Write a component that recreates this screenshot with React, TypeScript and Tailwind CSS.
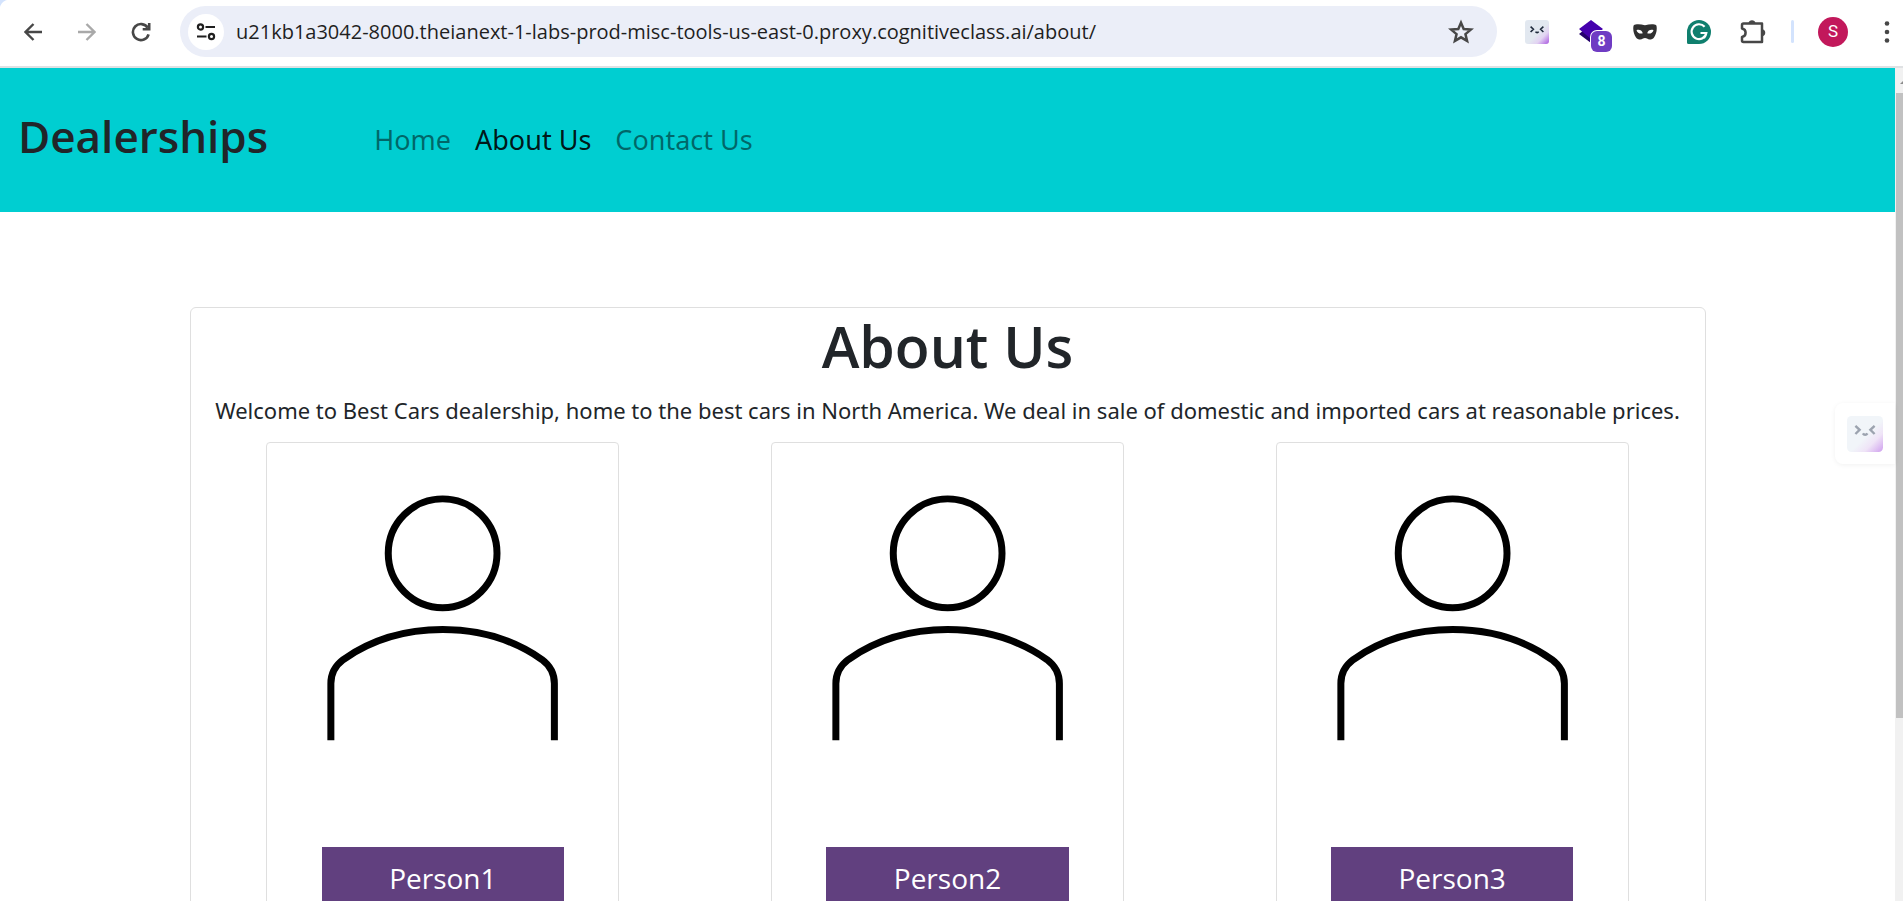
import type { ReactNode } from "react";

const people = ["Person1", "Person2", "Person3"];

const links = [
  { label: "Home", href: "/", active: false },
  { label: "About Us", href: "/about", active: true },
  { label: "Contact Us", href: "/contact", active: false },
];

function ToolButton({ label, children }: { label: string; children: ReactNode }) {
  return (
    <button type="button" aria-label={label} className="flex size-9 shrink-0 items-center justify-center">
      {children}
    </button>
  );
}

function FaceIcon({ className, stroke, id, soft }: { className: string; stroke: string; id: string; soft: boolean }) {
  return (
    <svg viewBox="0 0 24 24" className={className} fill="none" aria-hidden="true">
      <defs>
        <linearGradient id={id} x1="4" y1="4" x2="24" y2="24" gradientUnits="userSpaceOnUse">
          <stop offset="0.45" stopColor={soft ? "#f1f5f9" : "#e2e8f0"} />
          <stop offset="0.68" stopColor={soft ? "#efe4f7" : "#e2d2f2"} />
          <stop offset="1" stopColor={soft ? "#cf9fee" : "#a855e0"} />
        </linearGradient>
      </defs>
      <rect width="24" height="24" rx="3" fill={`url(#${id})`} />
      <path d="M5.6 6.6 8.4 9.2 5.6 12M18.4 6.6l-2.8 2.6 2.8 2.8M10.6 11.6c.7 1.3 2.3 1.3 3 0" stroke={stroke} strokeWidth="1.6" />
    </svg>
  );
}

function BrowserBar() {
  return (
    <div className="flex h-[68px] shrink-0 items-center border-b-2 border-[#dfe1e3] bg-white bg-[radial-gradient(circle_at_10px_10px,#fff_10px,#d3e3fd_11px)] bg-[length:10px_10px] bg-no-repeat pb-[3px] pl-[15px] text-[#474747]">
      <div className="flex items-center gap-[18px]">
        <ToolButton label="Back">
          <svg viewBox="0 0 18 18" className="size-[18px]" fill="none" stroke="currentColor" strokeWidth="2.4" aria-hidden="true">
            <path d="M18 9H1.500M9.500 1 1.500 9l8 8" />
          </svg>
        </ToolButton>
        <ToolButton label="Forward">
          <svg viewBox="0 0 18 18" className="size-[18px] text-[#a9a9a9]" fill="none" stroke="currentColor" strokeWidth="2.4" aria-hidden="true">
            <path d="M0 9h16.500M8.500 1l8 8-8 8" />
          </svg>
        </ToolButton>
        <ToolButton label="Reload">
          <svg viewBox="0 0 20 20" className="size-5" fill="none" stroke="currentColor" strokeWidth="2.6" aria-hidden="true">
            <path d="M17.600 12.300a8 8 0 1 1-.9-6.500M18.200 1v6.200h-6.500" />
          </svg>
        </ToolButton>
      </div>
      <div className="ml-[21px] flex h-[51px] min-w-0 flex-1 items-center rounded-full bg-[#ebeef8] pr-[18px] pl-2">
        <button type="button" aria-label="Site information" className="flex size-9 shrink-0 items-center justify-center rounded-full bg-white text-[#1f1f1f]">
          <svg viewBox="0 0 20 18" className="h-[18px] w-5" fill="none" stroke="currentColor" strokeWidth="2.2" aria-hidden="true">
            <circle cx="4.500" cy="4" r="2.600" />
            <path d="M9.500 4H19M1 13.500h9.500" />
            <circle cx="15.500" cy="13.500" r="2.600" />
          </svg>
        </button>
        <input
          type="text"
          aria-label="Address"
          defaultValue="u21kb1a3042-8000.theianext-1-labs-prod-misc-tools-us-east-0.proxy.cognitiveclass.ai/about/"
          className="ml-3 h-9 min-w-0 flex-1 bg-transparent font-['Open_Sans',sans-serif] text-[20px] text-[#1f1f1f] outline-none"
        />
        <ToolButton label="Bookmark this tab">
          <svg viewBox="0 0 24 24" className="size-[26px]" fill="none" stroke="currentColor" strokeWidth="2.3" aria-hidden="true">
            <path d="m12 3.400 2.500 5.900 6.600.5-5 4.200 1.500 6.200-5.600-3.300-5.600 3.300 1.500-6.200-5-4.200 6.600-.5z" />
          </svg>
        </ToolButton>
      </div>
      <div className="ml-[22px] flex items-center gap-[18px]">
        <ToolButton label="Face extension">
          <FaceIcon id="face-toolbar" className="size-6" stroke="#1e293b" soft={false} />
        </ToolButton>
        <ToolButton label="Layers extension, 8 items">
          <span className="relative block size-6">
            <svg viewBox="0 0 24 24" className="size-6" aria-hidden="true">
              <path d="m0 14 5-4 19 0-12 13z" fill="#24006b" />
              <path d="M12 0 24 9 12 19 0 9z" fill="#4500ad" />
            </svg>
            <span className="absolute top-[11px] left-3 flex size-[21px] items-center justify-center rounded-md bg-[#6f3cc3] font-['Roboto',sans-serif] text-[14px] font-bold text-white ring-1 ring-white">
              8
            </span>
          </span>
        </ToolButton>
        <ToolButton label="Mask extension">
          <svg viewBox="0 0 24 16" className="h-4 w-6" aria-hidden="true">
            <path d="M.6 1.400C3-.3 7.500.2 12 1.200 16.500.2 21-.3 23.400 1.400c1 4-.2 9-2.400 12-1.800 2.400-5 2.600-7 1.200-1-.7-3-.7-4 0-2 1.400-5.200 1.200-7-1.200C.8 10.400-.4 5.400.6 1.400z" fill="#303030" />
            <path d="M3.500 6.200c2.500-1 5.500 0 6.300 3-2.300 1-5.300.3-6.300-3zM20.500 6.200c-2.500-1-5.500 0-6.300 3 2.300 1 5.300.3 6.300-3z" fill="#fff" />
          </svg>
        </ToolButton>
        <ToolButton label="Writing assistant">
          <svg viewBox="0 0 24 24" className="size-6" fill="none" aria-hidden="true">
            <path d="M12 0a12 12 0 1 1 0 24H1.500A1.500 1.500 0 0 1 0 22.500V12A12 12 0 0 1 12 0z" fill="#0f7f6e" />
            <path d="M17.600 6.800A7.400 7.400 0 1 0 19.300 13H13.500M19.300 13c-.3 1.800-1 3.500-2.300 5" stroke="#fff" strokeWidth="2.200" />
          </svg>
        </ToolButton>
        <ToolButton label="Extensions">
          <svg viewBox="0 0 26 26" className="size-[26px]" aria-hidden="true">
            <path d="M3.500 4.500h18.500v18.500H3.500c-1 0-1.500-.5-1.500-1.500v-3.500c4.800-1 4.800-7.500 0-8.500V6c0-1 .5-1.500 1.500-1.500z" fill="none" stroke="currentColor" strokeWidth="2.500" strokeLinejoin="round" />
            <path d="M8.500 4a3.600 3.600 0 0 1 7 0zM22.500 10.200a3.600 3.600 0 0 1 0 7z" fill="currentColor" />
          </svg>
        </ToolButton>
      </div>
      <span className="ml-5 h-[23px] w-[3px] rounded-full bg-[#d3e3fd]" />
      <button type="button" aria-label="Profile" className="ml-6 flex size-[30px] shrink-0 items-center justify-center rounded-full bg-[#c2185b] font-['Roboto',sans-serif] text-[17px] text-white">
        S
      </button>
      <button type="button" aria-label="Browser menu" className="ml-8 flex h-9 w-[23px] shrink-0 items-center pl-1">
        <svg viewBox="0 0 6 22" className="h-[22px] w-[6px]" fill="currentColor" aria-hidden="true">
          <circle cx="3" cy="2.500" r="2.300" />
          <circle cx="3" cy="11" r="2.300" />
          <circle cx="3" cy="19.500" r="2.300" />
        </svg>
      </button>
    </div>
  );
}

function PersonCard({ name }: { name: string }) {
  return (
    <article className="flex w-[70%] flex-col items-center rounded border border-[#dfdfdf] bg-white pb-10">
      <svg viewBox="0 0 352 405" className="w-full" fill="none" stroke="#000" strokeWidth="7" role="img" aria-label={`Portrait of ${name}`}>
        <circle cx="176" cy="110.500" r="54.500" />
        <path d="M64 298V241C64 231 68.500 223 76.500 217C105 197 138 187 176 187S247 197 275.500 217C283.500 223 288 231 288 241V298" />
      </svg>
      <div className="w-[69%] bg-[#61407f] px-3 py-2 text-center text-white">
        <h2 className="text-[28px] leading-[46px]">{name}</h2>
      </div>
    </article>
  );
}

export default function App() {
  return (
    <div className="flex h-screen flex-col overflow-hidden bg-white font-['Open_Sans',sans-serif] text-[#212529]">
      <BrowserBar />
      <div className="relative flex min-h-0 flex-1">
        <div className="min-w-0 flex-1 overflow-hidden">
          <nav className="flex h-36 items-center bg-[#00ced1] px-[18px] pb-2">
            <a href="/" className="text-[44px] leading-[54px] font-semibold">Dealerships</a>
            <ul className="ml-[106px] flex gap-6 pt-2 font-['Noto_Sans',sans-serif] text-[27px] leading-[42px]">
              {links.map((link) => (
                <li key={link.label}>
                  <a href={link.href} className={link.active ? "text-black/90" : "text-black/50"}>{link.label}</a>
                </li>
              ))}
            </ul>
          </nav>
          <main className="mx-auto mt-[95px] w-4/5 rounded-md border border-[#dfdfdf] bg-white pb-10">
            <h1 className="text-center text-[57px] leading-[76px] font-semibold">About Us</h1>
            <p className="mt-2 text-center font-['Noto_Sans',sans-serif] text-[22px] leading-9 whitespace-nowrap">
              Welcome to Best Cars dealership, home to the best cars in North America. We deal in sale of domestic and imported cars at reasonable prices.
            </p>
            <div className="mt-[14px] grid grid-cols-3 justify-items-center">
              {people.map((name) => (
                <PersonCard key={name} name={name} />
              ))}
            </div>
          </main>
        </div>
        <button type="button" aria-label="Open side assistant" className="absolute top-[335px] right-2 flex h-[61px] w-[60px] items-center rounded-l-lg bg-white pl-3 shadow-[0_1px_5px_rgba(0,0,0,0.06)]">
          <FaceIcon id="face-side" className="size-9" stroke="#9ca3af" soft />
        </button>
        <div className="flex w-2 shrink-0 flex-col items-end overflow-hidden bg-[#f1f1f1]" aria-hidden="true">
          <svg viewBox="0 0 8 25" className="h-[25px] w-2 shrink-0">
            <path d="m5 16 6-6v6z" fill="#8b8b8b" />
          </svg>
          <div className="h-3/4 w-[7px] bg-[#c1c1c1]" />
        </div>
      </div>
    </div>
  );
}
